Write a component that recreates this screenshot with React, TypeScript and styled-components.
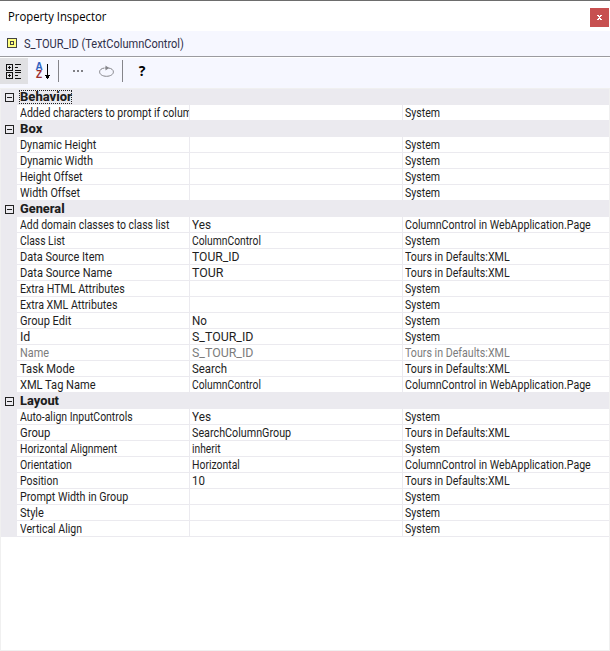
import React, { Fragment, useLayoutEffect, useRef, useState } from "react";
import styled, { createGlobalStyle } from "styled-components";

const Global = createGlobalStyle`
  * { box-sizing: border-box; }
  body { margin: 0; background: #fff; }
`;

const Panel = styled.main`
  width: 610px;
  height: 651px;
  display: flex;
  flex-direction: column;
  background: #fff;
  border-top: 1px solid #6d6d6d;
  color: #1e1e1e;
  font-family: Roboto, sans-serif;
`;

const TitleBar = styled.header`
  height: 30px;
  flex: none;
  display: flex;
  align-items: center;
  justify-content: space-between;
  padding: 0 1px 0 8px;
  background: #fff;
`;

const Title = styled.h1`
  margin: 0;
  padding-top: 1px;
  font: 400 12px/16px "Open Sans", sans-serif;
  color: #000;
`;

const CloseButton = styled.button`
  width: 19px;
  height: 19px;
  margin-top: 3px;
  padding: 0;
  display: grid;
  place-items: center;
  border: 0;
  background: #c75050;
`;

const SubjectBar = styled.div`
  height: 25px;
  flex: none;
  display: flex;
  align-items: flex-start;
  gap: 7px;
  padding: 7px 0 0 7px;
  background: #f6f7ff;
`;

const Subject = styled.span`
  margin-top: -2px;
  font-size: 12px;
  line-height: 16px;
  color: #30304a;
  white-space: nowrap;
`;

const Toolbar = styled.nav`
  height: 32px;
  flex: none;
  display: flex;
  align-items: flex-start;
  border-top: 1px solid #9b9ba0;
  padding-top: 1px;
  background: #f6f7ff;
  box-shadow: inset 0 1px #fff;
`;

const ToolButton = styled.button<{ $width: number; $shift?: number; $active?: boolean }>`
  width: ${(p) => p.$width}px;
  height: 26px;
  flex: none;
  padding: 0 ${(p) => p.$shift ?? 0}px 0 0;
  border: 0;
  background: ${(p) => (p.$active ? "#e0e0e3" : "transparent")};
  display: grid;
  place-items: center;
  font: 700 14px/26px "Open Sans", sans-serif;
  color: #000;
`;

const Separator = styled.div`
  width: 1px;
  height: 22px;
  flex: none;
  margin-top: 2px;
  background: #85858a;
`;

const SortGlyphs = styled.span`
  display: flex;
  align-items: center;
  gap: 2px;
  height: 26px;
`;

const Letters = styled.span`
  display: flex;
  flex-direction: column;
  width: 8px;
  text-align: center;
  font: 700 10px/8px "Liberation Sans", sans-serif;
`;

const Letter = styled.b<{ $color: string }>`
  height: 8px;
  color: ${(p) => p.$color};
`;

const Icon = styled.svg<{ $crisp?: boolean }>`
  display: block;
  flex: none;
  shape-rendering: ${(p) => (p.$crisp ? "crispEdges" : "auto")};
`;

const Sheet = styled.section`
  flex: 1;
  border: 1px solid #f0f0f0;
`;

const Category = styled.div`
  height: 16px;
  display: flex;
  align-items: flex-start;
  gap: 5px;
  padding: 4px 0 0 4px;
  background: #ebeaef;
`;

const CategoryName = styled.h2<{ $focused?: boolean }>`
  margin: -3px 0 0;
  padding: 0 2px 0 1px;
  height: 14px;
  font-size: 12.5px;
  line-height: 14px;
  font-weight: 800;
  outline: ${(p) => (p.$focused ? "1px dotted #222" : "none")};
  outline-offset: ${(p) => (p.$focused ? "-1px" : "0")};
`;

const Row = styled.div<{ $muted?: boolean }>`
  height: 16px;
  display: grid;
  grid-template-columns: 173px 213px 1fr;
  border-left: 16px solid #ebeaef;
  color: ${(p) => (p.$muted ? "#7c7c7c" : "#1e1e1e")};
`;

const Cell = styled.div<{ $first?: boolean; $last?: boolean }>`
  overflow: hidden;
  white-space: nowrap;
  padding: 1px 0 0 ${(p) => (p.$first ? 3 : 2)}px;
  border-right: ${(p) => (p.$last ? "0" : "1px solid #ebeaef")};
  border-bottom: 1px solid #ebeaef;
  font-size: 12.4px;
  line-height: 14px;
`;

const Run = styled.span`
  display: inline-block;
  white-space: nowrap;
  transform-origin: 0 50%;
`;

/** Advance widths, in pixels, of the condensed interface lettering. */
const widths: Record<string, number> = {
  "Property Inspector": 98,
  "S_TOUR_ID (TextColumnControl)": 160,
  Behavior: 52,
  Box: 22,
  General: 45,
  Layout: 39,
  "Added characters to prompt if colum": 172,
  "Dynamic Height": 76,
  "Dynamic Width": 73,
  "Height Offset": 63,
  "Width Offset": 60,
  "Add domain classes to class list": 149,
  "Class List": 45,
  "Data Source Item": 84,
  "Data Source Name": 92,
  "Extra HTML Attributes": 105,
  "Extra XML Attributes": 97,
  "Group Edit": 51,
  Id: 10,
  Name: 29,
  "Task Mode": 55,
  "XML Tag Name": 76,
  "Auto-align InputControls": 113,
  Group: 30,
  "Horizontal Alignment": 97,
  Orientation: 52,
  Position: 38,
  "Prompt Width in Group": 108,
  Style: 24,
  "Vertical Align": 62,
  Yes: 19,
  ColumnControl: 69,
  TOUR_ID: 48,
  TOUR: 31,
  No: 15,
  S_TOUR_ID: 61,
  Search: 35,
  SearchColumnGroup: 99,
  inherit: 29,
  Horizontal: 48,
  "10": 13,
  System: 35,
  "Tours in Defaults:XML": 105,
  "ColumnControl in WebApplication.Page": 186,
};

function Text({ children }: { children: string }) {
  const ref = useRef<HTMLSpanElement>(null);
  const [scale, setScale] = useState(1);
  useLayoutEffect(() => {
    const natural = ref.current?.offsetWidth;
    const target = widths[children];
    if (natural && target) setScale(target / natural);
  }, [children]);
  return (
    <Run ref={ref} style={{ transform: `scaleX(${scale})` }}>
      {children}
    </Run>
  );
}

type Item = [name: string, value: string, source: string, muted?: boolean];

const SYS = "System";
const TOURS = "Tours in Defaults:XML";
const PAGE = "ColumnControl in WebApplication.Page";

const groups: { name: string; items: Item[] }[] = [
  { name: "Behavior", items: [["Added characters to prompt if colum", "", SYS]] },
  {
    name: "Box",
    items: [
      ["Dynamic Height", "", SYS],
      ["Dynamic Width", "", SYS],
      ["Height Offset", "", SYS],
      ["Width Offset", "", SYS],
    ],
  },
  {
    name: "General",
    items: [
      ["Add domain classes to class list", "Yes", PAGE],
      ["Class List", "ColumnControl", SYS],
      ["Data Source Item", "TOUR_ID", TOURS],
      ["Data Source Name", "TOUR", TOURS],
      ["Extra HTML Attributes", "", SYS],
      ["Extra XML Attributes", "", SYS],
      ["Group Edit", "No", SYS],
      ["Id", "S_TOUR_ID", SYS],
      ["Name", "S_TOUR_ID", TOURS, true],
      ["Task Mode", "Search", TOURS],
      ["XML Tag Name", "ColumnControl", PAGE],
    ],
  },
  {
    name: "Layout",
    items: [
      ["Auto-align InputControls", "Yes", SYS],
      ["Group", "SearchColumnGroup", TOURS],
      ["Horizontal Alignment", "inherit", SYS],
      ["Orientation", "Horizontal", PAGE],
      ["Position", "10", TOURS],
      ["Prompt Width in Group", "", SYS],
      ["Style", "", SYS],
      ["Vertical Align", "", SYS],
    ],
  },
];

export default function App() {
  return (
    <Panel>
      <Global />
      <TitleBar>
        <Title>
          <Text>Property Inspector</Text>
        </Title>
        <CloseButton aria-label="Close">
          <Icon $crisp width="5" height="5" viewBox="0 0 5 5" fill="#fff">
            <path d="M0 0h2v1h1V0h2v1H4v1H3v1h1v1h1v1H3V4H2v1H0V4h1V3h1V2H1V1H0z" />
          </Icon>
        </CloseButton>
      </TitleBar>
      <SubjectBar>
        <Icon $crisp width="10" height="10" viewBox="0 0 10 10" fill="#ffff80" stroke="#444">
          <path d="M.5 .5h9v9h-9zM3.5 3.5h3v3h-3z" />
        </Icon>
        <Subject>
          <Text>S_TOUR_ID (TextColumnControl)</Text>
        </Subject>
      </SubjectBar>
      <Toolbar>
        <ToolButton $width={28} $shift={1} $active aria-label="Categorized">
          <Icon $crisp width="15" height="15" viewBox="0 0 15 15" fill="none" stroke="#111">
            <path d="M.5 .5h6v6h-6zM.5 8.500h6v6h-6zM2 3.500h3M3.500 2v3M2 11.500h3M3.500 10v3M9 .5h6M9 3.500h3M9 6.500h6M9 8.500h6M9 11.500h3M9 14.500h6" />
          </Icon>
        </ToolButton>
        <ToolButton $width={30} $shift={1} aria-label="Alphabetical">
          <SortGlyphs>
            <Letters>
              <Letter $color="#2f62c0">A</Letter>
              <Letter $color="#9c2f2f">Z</Letter>
            </Letters>
            <Icon $crisp width="5" height="15" viewBox="0 0 5 15" fill="#000">
              <path d="M2 0h1v11h2v1H4v2H3v1H2v-1H1v-2H0v-1h2z" />
            </Icon>
          </SortGlyphs>
        </ToolButton>
        <Separator />
        <ToolButton $width={37} aria-label="More">
          <Icon $crisp width="10" height="2" viewBox="0 0 10 2" fill="#808085">
            <path d="M0 0h2v2H0zM4 0h2v2H4zM8 0h2v2H8z" />
          </Icon>
        </ToolButton>
        <ToolButton $width={26} $shift={6} aria-label="Reset">
          <Icon width="15" height="13" viewBox="0 0 15 13" fill="none" stroke="#85858a">
            <path d="M5.500 3C2.500 3.300 .6 4.900 .6 6.900c0 2.500 3 4.400 6.900 4.400s6.900-1.900 6.900-4.400c0-2-2-3.600-4.900-3.900H6" />
            <path d="M6.500 .5v5L10 3z" fill="#85858a" stroke="none" />
          </Icon>
        </ToolButton>
        <Separator />
        <ToolButton $width={38} aria-label="Help">
          ?
        </ToolButton>
      </Toolbar>
      <Sheet>
        {groups.map((g, i) => (
          <Fragment key={g.name}>
            <Category>
              <Icon $crisp width="9" height="9" viewBox="0 0 9 9" fill="none" stroke="#222">
                <path d="M.5 .5h8v8h-8zM2 4.500h5" />
              </Icon>
              <CategoryName $focused={i === 0}>
                <Text>{g.name}</Text>
              </CategoryName>
            </Category>
            {g.items.map(([name, value, source, muted]) => (
              <Row key={name} $muted={muted}>
                <Cell $first>
                  <Text>{name}</Text>
                </Cell>
                <Cell>{value && <Text>{value}</Text>}</Cell>
                <Cell $last>
                  <Text>{source}</Text>
                </Cell>
              </Row>
            ))}
          </Fragment>
        ))}
      </Sheet>
    </Panel>
  );
}
